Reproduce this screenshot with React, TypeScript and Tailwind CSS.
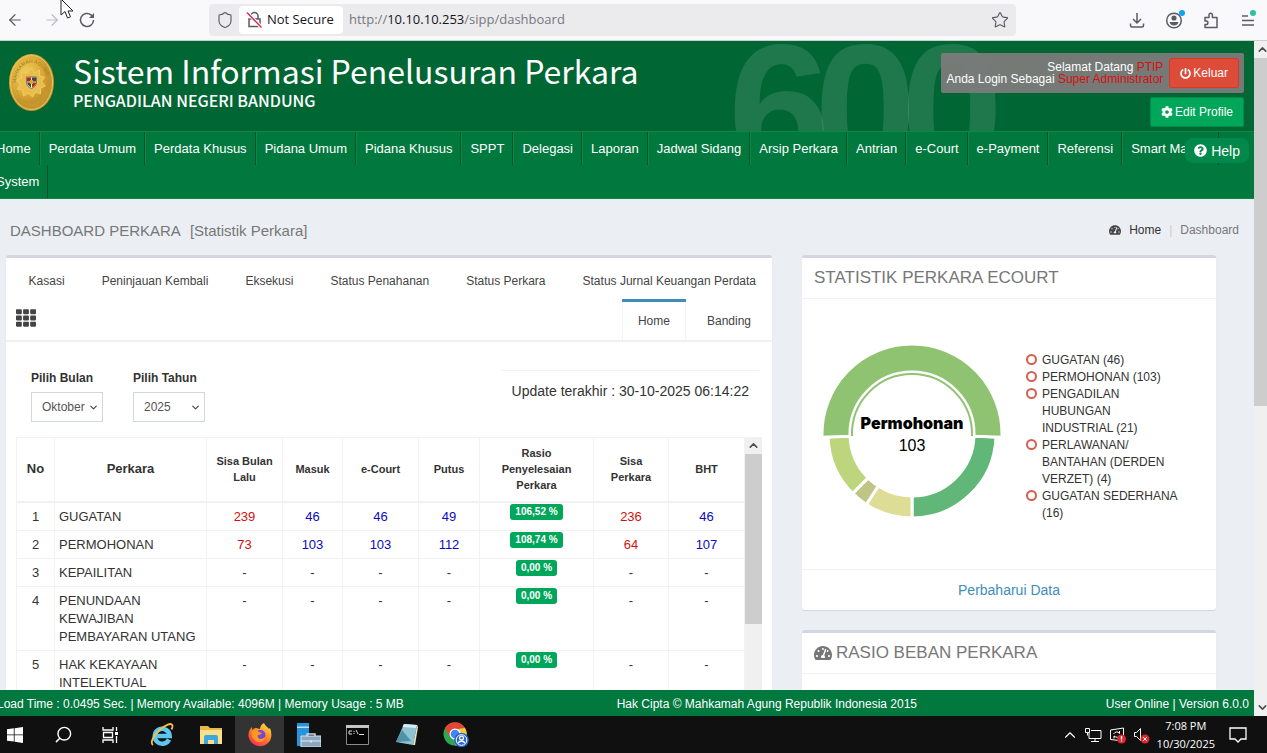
import { useState } from 'react'
import type { ReactNode } from 'react'
import { FaCog, FaPowerOff, FaQuestionCircle, FaTachometerAlt, FaTh } from 'react-icons/fa'
import { ArrowLeft, ArrowRight, ChevronDown, ChevronUp, Search, Shield, Star } from 'lucide-react'

const menus = [
    'Home', 'Perdata Umum', 'Perdata Khusus', 'Pidana Umum', 'Pidana Khusus', 'SPPT', 'Delegasi', 'Laporan',
    'Jadwal Sidang', 'Arsip Perkara', 'Antrian', 'e-Court', 'e-Payment', 'Referensi', 'Smart Majelis', 'System',
]

const tabs = ['Kasasi', 'Peninjauan Kembali', 'Eksekusi', 'Status Penahanan', 'Status Perkara', 'Status Jurnal Keuangan Perdata']

const rows = [
    { name: 'GUGATAN', sisaLalu: '239', masuk: '46', ecourt: '46', putus: '49', rasio: '106,52 %', sisa: '236', bht: '46' },
    { name: 'PERMOHONAN', sisaLalu: '73', masuk: '103', ecourt: '103', putus: '112', rasio: '108,74 %', sisa: '64', bht: '107' },
    { name: 'KEPAILITAN', sisaLalu: '-', masuk: '-', ecourt: '-', putus: '-', rasio: '0,00 %', sisa: '-', bht: '-' },
    { name: 'PENUNDAAN KEWAJIBAN PEMBAYARAN UTANG', sisaLalu: '-', masuk: '-', ecourt: '-', putus: '-', rasio: '0,00 %', sisa: '-', bht: '-' },
    { name: 'HAK KEKAYAAN INTELEKTUAL', sisaLalu: '-', masuk: '-', ecourt: '-', putus: '-', rasio: '0,00 %', sisa: '-', bht: '-' },
]

const legend = ['GUGATAN (46)', 'PERMOHONAN (103)', 'PENGADILAN HUBUNGAN INDUSTRIAL (21)', 'PERLAWANAN/ BANTAHAN (DERDEN VERZET) (4)', 'GUGATAN SEDERHANA (16)']

// angles are clockwise from the top
const slices = [
    { from: 92, to: 180, color: '#60b778', r: 84 },
    { from: 180, to: 213, color: '#dedd95', r: 84 },
    { from: 213, to: 225, color: '#c0c485', r: 84 },
    { from: 225, to: 268, color: '#bdd57c', r: 84 },
    { from: 268, to: 452, color: '#8fc371', r: 90 },
]

const point = (r: number, deg: number) => {
    const a = (deg * Math.PI) / 180
    return `${90 + r * Math.sin(a)} ${90 - r * Math.cos(a)}`
}

const slicePath = (r: number, from: number, to: number) => {
    const large = to - from > 180 ? 1 : 0
    return `M${point(r, from)}A${r} ${r} 0 ${large} 1 ${point(r, to)}L${point(62, to)}A62 62 0 ${large} 0 ${point(62, from)}Z`
}

const Toolbar = () => (
    <div className="relative flex h-[41px] shrink-0 items-center border-b border-[#c9d0cb] bg-[#f9f9fb] text-[#5b5b66]">
        <button aria-label="Back" className="ml-[6px]"><ArrowLeft size={18} strokeWidth={1.6} /></button>
        <button aria-label="Forward" className="ml-[19px] text-[#bcbcc4]"><ArrowRight size={18} strokeWidth={1.6} /></button>
        <button aria-label="Reload" className="ml-[17px]">
            <svg width="18" height="18" viewBox="0 0 18 18" fill="none" stroke="currentColor" strokeWidth="1.5">
                <path d="M15.500 9a6.500 6.500 0 1 1-2.200-4.900l1.700 1.700" />
                <path d="M16 2v5h-5z" fill="currentColor" stroke="none" />
            </svg>
        </button>
        <svg className="absolute left-[60px] top-0" width="14" height="20" viewBox="0 0 14 20">
            <path d="M1 -1v16l4-3.500 2.500 6.500 3-1.200L8 11h5z" fill="#fff" stroke="#222" />
        </svg>

        <div className="ml-[113px] flex h-8 w-[63.7%] items-center rounded bg-[#ebebed] font-['Open_Sans',sans-serif] text-[13px]">
            <Shield className="ml-[7px]" size={18} strokeWidth={1.5} />
            <div className="ml-[5px] flex h-7 w-[104px] items-center rounded-sm bg-white pl-[7px] text-[#15141a]">
                <svg className="mr-1 shrink-0" width="17" height="18" viewBox="0 0 17 18" fill="none" stroke="#5b5b66" strokeWidth="1.5">
                    <path d="M5 7.500V5a3.500 3.500 0 0 1 7 0v2.500M3 8h11v7.500H3z" />
                    <path d="M1 1.500l14.500 15" stroke="#fff" strokeWidth="3.500" />
                    <path d="M1 1.500l14.500 15" stroke="#e22850" />
                </svg>
                Not Secure
            </div>
            <span className="ml-[6px] flex-1 text-[#77777f]">http://<span className="text-[#15141a]">10.10.10.253</span>/sipp/dashboard</span>
            <button aria-label="Bookmark" className="mr-[7px]"><Star size={18} strokeWidth={1.5} /></button>
        </div>

        <div className="ml-auto mr-[12px] flex items-center gap-[19px]">
            <button aria-label="Downloads">
                <svg width="18" height="18" viewBox="0 0 18 18" fill="none" stroke="currentColor" strokeWidth="1.500">
                    <path d="M9 2v9.500M5 8l4 4 4-4M2.500 12.500v2q0 1.500 1.500 1.500h10q1.500 0 1.500-1.500v-2" />
                </svg>
            </button>
            <button aria-label="Account" className="relative">
                <svg width="18" height="18" viewBox="0 0 18 18" fill="none" stroke="currentColor" strokeWidth="1.500">
                    <circle cx="9" cy="9.500" r="7.300" />
                    <circle cx="9" cy="7" r="2.600" fill="currentColor" stroke="none" />
                    <path d="M4.500 11h9q-1 3.500-4.500 3.500T4.500 11z" fill="currentColor" stroke="none" />
                </svg>
                <span className="absolute -right-[2px] -top-[1px] h-[6px] w-[6px] rounded-full bg-[#0aa5f5]" />
            </button>
            <button aria-label="Extensions">
                <svg width="18" height="18" viewBox="0 0 18 18" fill="none" stroke="currentColor" strokeWidth="1.500" strokeLinejoin="round">
                    <path d="M3 6.500h4V4q0-1.800 1.700-1.800T10.400 4v2.500H15V16.500H3v-3h1.200q1.700 0 1.700-1.800T4.200 10H3z" />
                </svg>
            </button>
            <button aria-label="Menu" className="relative">
                <svg width="16" height="18" viewBox="0 0 16 18" stroke="currentColor" strokeWidth="1.500">
                    <path d="M3 5h6M3 9.500h12M3 14h12" />
                </svg>
                <span className="absolute -right-[1px] -top-[1px] h-[6px] w-[6px] rounded-full bg-[#2ac3a2]" />
            </button>
        </div>
    </div>
)

const Emblem = () => (
    <svg className="mt-[12px] shrink-0" width="47" height="59" viewBox="0 0 47 59">
        <defs>
            <radialGradient id="gold" cx="38%" cy="35%">
                <stop offset="0" stopColor="#f0cd5c" />
                <stop offset="0.700" stopColor="#dcab35" />
                <stop offset="1" stopColor="#c6942c" />
            </radialGradient>
            <path id="ring" d="M8 30a15.500 20 0 0 1 31 0" />
        </defs>
        <ellipse cx="23.500" cy="29.500" rx="22.500" ry="28.500" fill="url(#gold)" />
        <ellipse cx="23.500" cy="29.500" rx="21" ry="27" fill="none" stroke="#e9c767" />
        <path d="M9 38q4 13 14.500 14T38 38" fill="none" stroke="#c99a33" strokeWidth="2" strokeDasharray="1 1" />
        <text fontSize="5" fill="#a0771f" fontFamily="Liberation Sans"><textPath href="#ring">MAHKAMAH AGUNG</textPath></text>
        <path d="M23.500 15l3 5 5-3 0 6 5 1-3 5 4 4-5 2 0 6-5-2-3 5-4-4-5 3-1-6-5-1 3-5-4-4 5-2 0-6 5 1z" fill="#e8bd4b" stroke="#f0d073" strokeWidth="0.800" />
        <path d="M18.500 24h10v5q0 4.500-5 6.500Q18.500 33.500 18.500 29z" fill="#f3e8d0" stroke="#555" strokeWidth="0.700" />
        <path d="M19 24.500H23v4h-4zM24 29.500h4q0 3-4 5z" fill="#b12a22" />
        <path d="M24 24.500h4v4h-4zM19 29.500h4v5q-3.500-2-4-5z" fill="#444" />
        <path d="M22 27h3v4h-3z" fill="#d8a520" />
    </svg>
)

const Header = () => (
    <header className="relative flex h-[90px] shrink-0 overflow-hidden bg-[#006633] pl-2 text-white">
        {/* version number behind the header */}
        <div className="absolute left-[728px] top-[-25px] flex text-[184px] font-bold leading-none text-white/12" aria-hidden="true">
            <span>6</span>
            <span className="-ml-4">0</span>
            <span className="-ml-4">0</span>
        </div>
        <Emblem />
        <div className="ml-[18px] pt-[5px] font-['Noto_Sans_CJK_SC',sans-serif]">
            <h1 className="text-[32px] leading-[48px]">Sistem Informasi Penelusuran Perkara</h1>
            <h2 className="text-base font-medium leading-3">PENGADILAN NEGERI BANDUNG</h2>
        </div>
        <div className="relative ml-auto mr-[10px] mt-[12px] flex flex-col items-end gap-1 text-xs">
            <div className="flex items-center gap-[6px] rounded-xs bg-[#7b7b7b]/95 p-[5px]">
                <p className="text-right leading-3">
                    Selamat Datang <span className="text-[#d80f0f]">PTIP</span><br />
                    Anda Login Sebagai <span className="text-[#d80f0f]">Super Administrator</span>
                </p>
                <button className="flex h-[30px] items-center gap-[2px] rounded-[3px] border border-[#d73925] bg-[#dd4b39] px-[10px]">
                    <FaPowerOff size={11} />Keluar
                </button>
            </div>
            <button className="flex h-[30px] items-center gap-[2px] rounded-xs border border-[#008d4c] bg-[#00a65a] px-[10px]">
                <FaCog size={12} />Edit Profile
            </button>
        </div>
    </header>
)

const Nav = () => (
    <nav className="relative shrink-0 border-y border-[#0b8746] bg-[#00783e] text-[13px] text-white">
        <ul className="-ml-[13px] flex flex-wrap">
            {menus.map((menu) => (
                <li key={menu} className="border-r border-[#00522a]">
                    <a href="#" className="block border-l border-[#0b8746] px-2 leading-[33px]">{menu}</a>
                </li>
            ))}
        </ul>
        <button className="absolute right-[5px] top-[6px] flex h-[25px] items-center gap-1 rounded-lg bg-[#00894a] px-[9px] text-sm">
            <FaQuestionCircle size={13} />Help
        </button>
    </nav>
)

const Filter = ({ id, label, value }: { id: string; label: string; value: string }) => (
    <div>
        <label htmlFor={id} className="block text-xs font-bold leading-[18px]">{label}</label>
        <div className="relative mt-[5px] w-[72px]">
            <select id={id} className="h-[30px] w-full appearance-none border border-[#d2d6de] bg-white pl-[10px] text-xs text-[#555]">
                <option>{value}</option>
            </select>
            <ChevronDown className="pointer-events-none absolute right-[4px] top-[10px] text-[#444]" size={11} strokeWidth={2.5} />
        </div>
    </div>
)

const Num = ({ children, red }: { children: string; red?: boolean }) => {
    const color = children === '-' ? 'text-[#333]' : red ? 'text-[#d40f0f]' : 'text-[#0a0ac0]'
    return <td className={`border border-[#f2f2f2] px-1 pt-[5px] pb-1 text-center ${color}`}>{children}</td>
}

const th = 'border border-b-2 border-[#f2f2f2] px-2 text-[11px] leading-4'

const PerkaraTable = () => (
    <div className="flex">
        <table className="w-full flex-1 table-fixed border-collapse text-[13px] leading-[18px]">
            <colgroup>
                <col className="w-[38px]" />
                <col className="w-[152px]" />
                <col className="w-[76px]" />
                <col className="w-[60px]" />
                <col className="w-[76px]" />
                <col className="w-[61px]" />
                <col className="w-[114px]" />
                <col className="w-[75px]" />
                <col />
            </colgroup>
            <thead>
                <tr className="h-[64px]">
                    <th className="border border-b-2 border-[#f2f2f2]">No</th>
                    <th className="border border-b-2 border-[#f2f2f2]">Perkara</th>
                    <th className={th}>Sisa Bulan Lalu</th>
                    <th className={th}>Masuk</th>
                    <th className={th}>e-Court</th>
                    <th className={th}>Putus</th>
                    <th className={th}>Rasio Penyelesaian Perkara</th>
                    <th className={th}>Sisa Perkara</th>
                    <th className={th}>BHT</th>
                </tr>
            </thead>
            <tbody>
                {rows.map((row, i) => (
                    <tr key={row.name} className="align-top">
                        <td className="border border-[#f2f2f2] pt-[5px] pb-1 text-center">{i + 1}</td>
                        <td className="border border-[#f2f2f2] pt-[5px] pb-1 pl-1">{row.name}</td>
                        <Num red>{row.sisaLalu}</Num>
                        <Num>{row.masuk}</Num>
                        <Num>{row.ecourt}</Num>
                        <Num>{row.putus}</Num>
                        <td className="border border-[#f2f2f2] pt-px text-center">
                            <span className="mx-auto block w-fit rounded-[3px] bg-[#00a65a] px-[5px] text-[10px] font-bold leading-4 text-white">{row.rasio}</span>
                        </td>
                        <Num red>{row.sisa}</Num>
                        <Num>{row.bht}</Num>
                    </tr>
                ))}
            </tbody>
        </table>
        <div className="flex w-[17px] shrink-0 flex-col items-center bg-[#f0f0f0] text-[#505050]">
            <ChevronUp className="my-[2px]" size={13} strokeWidth={3} />
            <div className="h-[170px] w-full bg-[#cdcdcd]" />
        </div>
    </div>
)

const StatistikPanel = () => {
    const [active, setActive] = useState('Home')

    return (
        <section className="min-w-0 flex-1 rounded-t-[3px] border-t-[3px] border-[#d2d6de] bg-white shadow-[0_1px_1px_rgba(0,0,0,0.1)]">
            <div className="border-b border-[#f0f0f0] text-xs text-[#444] shadow-[0_1px_1px_rgba(0,0,0,0.06)]">
                <div className="flex h-[41px] justify-end gap-[5px]">
                    {tabs.map((tab) => (
                        <button key={tab} onClick={() => setActive(tab)} className="px-4 pt-1">{tab}</button>
                    ))}
                </div>
                <div className="flex h-[41px] gap-[5px] pr-[5px]">
                    <button aria-label="Menu perkara" className="ml-[10px] mr-auto pb-1"><FaTh size={20} /></button>
                    {['Home', 'Banding'].map((tab) => (
                        <button
                            key={tab}
                            onClick={() => setActive(tab)}
                            className={`h-full border-t-[3px] px-4 ${active === tab ? 'border-[#3c8dbc] shadow-[inset_1px_0_#f4f4f4,inset_-1px_0_#f4f4f4]' : 'border-transparent'}`}
                        >
                            {tab}
                        </button>
                    ))}
                </div>
            </div>

            <div className="px-[10px] pt-7">
                <div className="flex justify-between pl-[15px] pr-[3px]">
                    <div className="flex gap-[30px]">
                        <Filter id="bulan" label="Pilih Bulan" value="Oktober" />
                        <Filter id="tahun" label="Pilih Tahun" value="2025" />
                    </div>
                    <p className="mt-px self-start border-t border-[#f2f2f2] px-[10px] py-[10px] text-sm leading-5">Update terakhir : 30-10-2025 06:14:22</p>
                </div>
                <div className="mt-[15px]"><PerkaraTable /></div>
            </div>
        </section>
    )
}

const Card = ({ title, children }: { title: ReactNode; children: ReactNode }) => (
    <section className="rounded-[3px] border-t-[3px] border-[#d2d6de] bg-white shadow-[0_1px_1px_rgba(0,0,0,0.1)]">
        <h3 className="flex h-[41px] items-center gap-1 border-b border-[#f2f2f2] px-3 text-[17px] text-[#777]">{title}</h3>
        {children}
    </section>
)

const Donut = () => (
    <svg width="180" height="180" viewBox="0 0 180 180" className="shrink-0" role="img" aria-label="Permohonan 103">
        {slices.map((s) => (
            <path key={s.from} d={slicePath(s.r, s.from, s.to)} fill={s.color} stroke="#fff" strokeWidth="3" />
        ))}
        <path d={`M${point(60, 268)}A60 60 0 1 1 ${point(60, 452)}`} fill="none" stroke="#8fc371" strokeWidth="2" />
        <text x="90" y="85" textAnchor="middle" fontSize="16" fontWeight="900" fontFamily="Inter, sans-serif">Permohonan</text>
        <text x="90" y="107" textAnchor="middle" fontSize="16" fontFamily="Liberation Sans, sans-serif">103</text>
    </svg>
)

const Taskbar = () => (
    <div className="flex h-[37px] shrink-0 items-center bg-[#101010] text-white">
        <button aria-label="Start" className="-ml-[9px] flex w-12 justify-center">
            <svg width="16" height="16" viewBox="0 0 16 16" fill="#fff"><path d="M0 2.300l6.800-1v6.200H0zM7.600 1.200L16 0v7.500H7.600zM0 8.300h6.800v6.300L0 13.700zM7.600 8.300H16V16l-8.400-1.200z" /></svg>
        </button>
        <button aria-label="Search" className="flex w-12 justify-center"><Search className="-scale-x-100" size={19} strokeWidth={1.8} /></button>
        <button aria-label="Task view" className="flex w-12 justify-center">
            <svg width="18" height="18" viewBox="0 0 18 18" fill="none" stroke="#fff" strokeWidth="1.300">
                <path d="M1 1v3h10V1M1 17v-3h10v3M1.500 6.500h9v5h-9zM14.500 1v4M14.500 10v7" />
                <path d="M13 6h3v3h-3z" fill="#fff" stroke="none" />
            </svg>
        </button>
        <button aria-label="Internet Explorer" className="ml-[2px] flex w-[49px] justify-center">
            <svg width="24" height="24" viewBox="0 0 24 24" fill="none">
                <path d="M19 16.500A7.500 7.500 0 1 1 19.700 13H6" stroke="#5cc8f2" strokeWidth="4.500" />
                <path d="M3 22c-3-2 0-9 6-14.500S22-1 22.500 2.500q.2 1.700-1 4" stroke="#f5c242" strokeWidth="1.800" />
            </svg>
        </button>
        <button aria-label="File Explorer" className="flex w-[49px] justify-center">
            <svg width="22" height="20" viewBox="0 0 22 20">
                <path d="M0 1h8l2 2h12v16H0z" fill="#e8b84a" />
                <path d="M0 5h22v14H0z" fill="#fbe08c" />
                <path d="M4 19v-7q0-2 2-2h10q2 0 2 2v7h-4v-4H8v4z" fill="#3ea7dd" />
            </svg>
        </button>
        <button aria-label="Firefox" className="flex h-full w-[49px] items-center justify-center bg-[#333]">
            <svg width="24" height="24" viewBox="0 0 24 24">
                <defs>
                    <linearGradient id="fox" x1="0.800" y1="0" x2="0.200" y2="1">
                        <stop offset="0" stopColor="#ffe14a" />
                        <stop offset="0.450" stopColor="#ff8a22" />
                        <stop offset="1" stopColor="#f0275e" />
                    </linearGradient>
                </defs>
                <path d="M16 0c1 3 4 4 5 6l1-1c2 5 2 10-1 14-5 6-14 5-18 0C-1 14 0 8 4 4v3q2-2 4-2l4 1c0-3 2-5 4-6z" fill="url(#fox)" />
                <circle cx="12.500" cy="12" r="5" fill="#7546d9" />
                <path d="M4 8q4-2 7 1l3 1q-1 2-4 2-1 3 2 4 3 0 5-2-1 6-7 5-7-2-6-11z" fill="#ff981f" />
            </svg>
        </button>
        <button aria-label="Server Manager" className="flex w-[49px] justify-center">
            <svg width="24" height="24" viewBox="0 0 24 24">
                <path d="M0 0h12v23H0z" fill="#2793d8" /><path d="M0 3.500h12v1.500H0z" fill="#b8e1f8" />
                <path d="M10 13v-2h8v2" fill="none" stroke="#c9d8e5" strokeWidth="1.500" />
                <path d="M4 13h20v11H4z" fill="#8ba6bf" stroke="#d6e2ec" /><path d="M4 18h20M14 17v3" stroke="#e6edf3" />
            </svg>
        </button>
        <button aria-label="Command Prompt" className="flex w-[49px] justify-center">
            <svg width="23" height="20" viewBox="0 0 23 20">
                <path d="M.5.500h22v19H.5z" fill="#050505" stroke="#8b8b8b" /><path d="M0 0h23v3H0z" fill="#c5c5c5" />
                <path d="M6 6H3v3h3M8 6v1M8 8v1M10 5l2 4M13 9.500h5" fill="none" stroke="#ddd" />
            </svg>
        </button>
        <button aria-label="Notepad" className="flex w-[49px] justify-center">
            <svg width="24" height="24" viewBox="0 0 24 24">
                <path d="M9 1l13 1-4 20-17-3z" fill="#8cc4d2" /><path d="M22 2l1 2-3 18-2 0z" fill="#eee3c6" />
                <path d="M9 1l13 1-1 3L7.500 4z" fill="#d9edf0" /><path d="M7 7l9 11-15 1z" fill="#4f91a6" />
            </svg>
        </button>
        <button aria-label="Chrome" className="flex w-[49px] justify-center">
            <svg width="26" height="26" viewBox="0 0 26 26">
                <circle cx="12" cy="12" r="11.500" fill="#2da94f" />
                <path d="M2 6a11.500 11.500 0 0 1 20 0l-10 1-5 8z" fill="#e64435" />
                <path d="M22 6a11.500 11.500 0 0 1-10 17.500L17 15l-2-8z" fill="#fcc934" />
                <circle cx="12" cy="12" r="5.500" fill="#fff" /><circle cx="12" cy="12" r="4.300" fill="#4285f4" />
                <circle cx="18.500" cy="18" r="7.300" fill="#2a65d0" /><circle cx="18.500" cy="18" r="5.300" fill="none" stroke="#fff" />
                <circle cx="18.500" cy="16" r="1.900" fill="none" stroke="#fff" strokeWidth="1.300" /><path d="M15 21q3.500-4 7 0" fill="none" stroke="#fff" strokeWidth="1.300" />
            </svg>
        </button>

        <div className="ml-auto mr-[20px] flex items-center">
            <ChevronUp size={18} strokeWidth={1.5} className="mr-[6px]" />
            <svg className="mr-[7px]" width="17" height="16" viewBox="0 0 17 16" fill="none" stroke="#fff">
                <path d="M6 3.500h10v8H4V6M10 11.500v3M6 14.500h8M.5 1.500h4v4h-4zM2.500 5.500v3" />
            </svg>
            <svg className="mr-[6px]" width="18" height="18" viewBox="0 0 18 18" fill="none" stroke="#fff">
                <path d="M1.500 4l13-2v13l-13-1.500z" /><path d="M4.500 8q3-4 6-.5V5M11 9q-2 4-6 1v2.500" />
                <circle cx="12.500" cy="13" r="4.500" fill="#d9272e" stroke="none" /><path d="M12.500 10v3.500M12.500 14.500v1" strokeWidth="1.400" />
            </svg>
            <svg className="mr-[7px]" width="17" height="18" viewBox="0 0 17 18" fill="none" stroke="#fff">
                <path d="M1.500 6.500h2l4-4v12l-4-4h-2z" />
                <circle cx="12" cy="13" r="4.500" fill="#d9272e" stroke="none" /><path d="M10.200 11.200l3.600 3.600M13.800 11.200l-3.600 3.600" />
            </svg>
            <p className="text-center font-['Open_Sans',sans-serif] text-[11px] leading-[18px]">7:08 PM<br />10/30/2025</p>
            <svg className="ml-[14px]" width="18" height="18" viewBox="0 0 18 18" fill="none" stroke="#fff" strokeWidth="1.300">
                <path d="M1 2h16v11h-5l-3 3-3-3H1z" />
            </svg>
        </div>
    </div>
)

const App = () => {
    return (
        <div className="flex h-screen flex-col overflow-hidden font-['Liberation_Sans',Arial,sans-serif] text-[#333]">
            <Toolbar />
            <div className="flex min-h-0 flex-1">
                <div className="flex min-w-0 flex-1 flex-col bg-[#ebeff4]">
                    <Header />
                    <Nav />
                    <main className="min-h-0 flex-1 overflow-hidden">
                        <div className="flex h-[56px] items-center justify-between pl-[10px] pr-[15px] pt-2">
                            <h2 className="flex gap-[9px] text-[15px] text-[#777]">DASHBOARD PERKARA <span>[Statistik Perkara]</span></h2>
                            <div className="flex items-center pb-0.5 text-xs">
                                <FaTachometerAlt size={12} className="mr-2 text-[#444]" />
                                <a href="#" className="text-[#333]">Home</a>
                                <span className="mx-2 text-[#ccc]">|</span>
                                <span className="text-[#777]">Dashboard</span>
                            </div>
                        </div>
                        <div className="flex items-start gap-[30px] pl-[6px] pr-[38px]">
                            <StatistikPanel />
                            <div className="flex w-[35%] max-w-[414px] flex-col gap-5">
                                <Card title="STATISTIK PERKARA ECOURT">
                                    <div className="flex h-[270px] items-center gap-[24px] pl-[20px]">
                                        <Donut />
                                        <ul className="mt-[6px] w-[152px] text-xs leading-[17px]">
                                            {legend.map((item) => (
                                                <li key={item} className="flex gap-[5px]">
                                                    <span className="mt-[2px] h-[11px] w-[11px] shrink-0 rounded-full border-2 border-[#d4604f]" />
                                                    {item}
                                                </li>
                                            ))}
                                        </ul>
                                    </div>
                                    <div className="border-t border-[#f2f2f2] text-center text-sm leading-10">
                                        <a href="#" className="text-[#3c8dbc]">Perbaharui Data</a>
                                    </div>
                                </Card>
                                <Card title={<><FaTachometerAlt size={18} />RASIO BEBAN PERKARA</>}>
                                    <div className="h-[200px]" />
                                </Card>
                            </div>
                        </div>
                    </main>
                    <footer className="flex h-[26px] shrink-0 items-center overflow-hidden whitespace-nowrap bg-[#00783e] pr-[5px] pt-0.5 text-xs text-white">
                        <span className="-ml-[3px]">Load Time : 0.0495 Sec. | Memory Available: 4096M | Memory Usage : 5 MB</span>
                        <span className="flex-1 pl-6 text-center">Hak Cipta © Mahkamah Agung Republik Indonesia 2015</span>
                        <span>User Online | Version 6.0.0</span>
                    </footer>
                </div>
                <div className="flex w-[13px] shrink-0 flex-col overflow-hidden bg-[#f0f0f0] text-[#505050]">
                    <ChevronUp className="my-[2px] ml-[2px] shrink-0" size={13} strokeWidth={3} />
                    <div className="h-[348px] bg-[#cdcdcd]" />
                    <ChevronDown className="mb-[2px] ml-[2px] mt-auto shrink-0" size={13} strokeWidth={3} />
                </div>
            </div>
            <Taskbar />
        </div>
    )
}

export default App
